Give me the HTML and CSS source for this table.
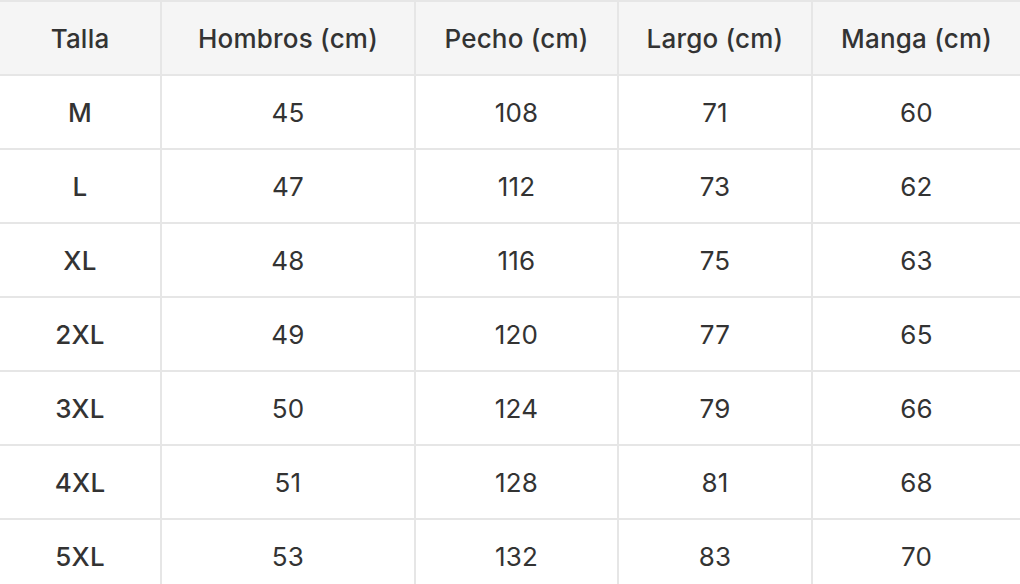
FILE: index.html
```html
<!DOCTYPE html>
<html lang="es">
<head>
<meta charset="utf-8">
<title>Guía de tallas</title>
<link rel="stylesheet" href="styles.css">
</head>
<body>
<div class="size-table">
  <div class="cell head">Talla</div>
  <div class="cell head">Hombros (cm)</div>
  <div class="cell head">Pecho (cm)</div>
  <div class="cell head">Largo (cm)</div>
  <div class="cell head">Manga (cm)</div>

  <div class="cell size">M</div><div class="cell">45</div><div class="cell">108</div><div class="cell">71</div><div class="cell">60</div>
  <div class="cell size">L</div><div class="cell">47</div><div class="cell">112</div><div class="cell">73</div><div class="cell">62</div>
  <div class="cell size">XL</div><div class="cell">48</div><div class="cell">116</div><div class="cell">75</div><div class="cell">63</div>
  <div class="cell size">2XL</div><div class="cell">49</div><div class="cell">120</div><div class="cell">77</div><div class="cell">65</div>
  <div class="cell size">3XL</div><div class="cell">50</div><div class="cell">124</div><div class="cell">79</div><div class="cell">66</div>
  <div class="cell size">4XL</div><div class="cell">51</div><div class="cell">128</div><div class="cell">81</div><div class="cell">68</div>
  <div class="cell size">5XL</div><div class="cell">53</div><div class="cell">132</div><div class="cell">83</div><div class="cell">70</div>
</div>
</body>
</html>
```

FILE: styles.css
```css
html, body {
  margin: 0;
  padding: 0;
  background: #ffffff;
}
body {
  font-family: Inter, "Noto Sans", "Liberation Sans", sans-serif;
  color: #333333;
  overflow: hidden;
}
.size-table {
  display: grid;
  grid-template-columns: 160px 252px 201px 192px 207px;
  grid-auto-rows: 72px;
  gap: 2px;
  padding-top: 2px;
  background: #e6e6e6;
  width: 1020px;
}
.cell {
  display: flex;
  align-items: center;
  justify-content: center;
  background: #ffffff;
  font-size: 26px;
  font-weight: 400;
  letter-spacing: 0.2px;
}
.head {
  background: #f5f5f5;
  font-weight: 500;
}
.size {
  font-weight: 500;
}
```
